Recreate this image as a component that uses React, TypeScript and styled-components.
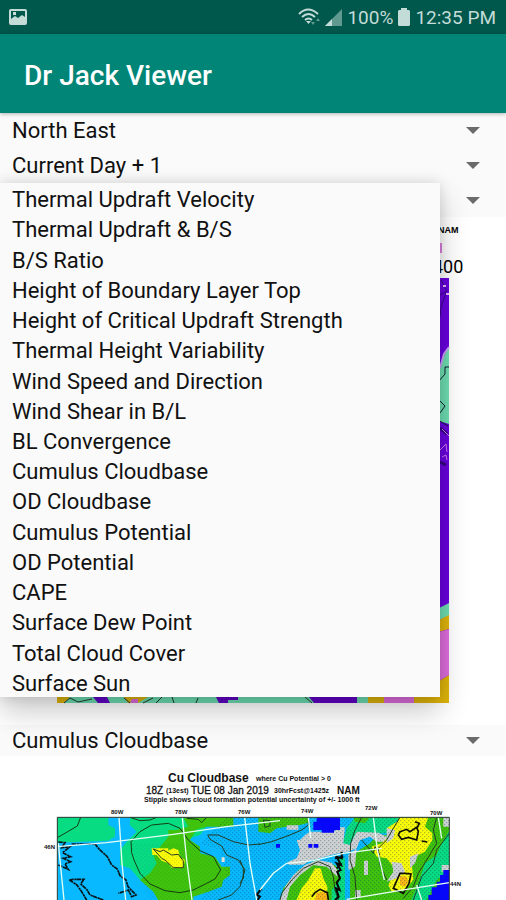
import React from "react";
import styled, { createGlobalStyle } from "styled-components";

const GlobalStyle = createGlobalStyle`
  * { box-sizing: border-box; }
  body {
    margin: 0;
    background: #fafafa;
    color: #111;
    font-family: Roboto, sans-serif;
    font-size: 22px;
  }
`;

const Screen = styled.div`
  display: flex;
  flex-direction: column;
  overflow: hidden;
`;

const StatusBar = styled.div`
  display: flex;
  align-items: center;
  justify-content: space-between;
  height: 34px;
  padding: 0 10px 0 8px;
  background: #00574b;
  color: #c3dcd8;
  font-size: 19px;
`;

const StatusGroup = styled.div`
  display: flex;
  align-items: center;
  gap: 5px;
`;

const AppBar = styled.header`
  display: flex;
  align-items: center;
  height: 79px;
  padding: 4px 24px 0;
  background: #008577;
  box-shadow: 0 1px 4px rgba(0, 0, 0, 0.3);
  z-index: 1;
`;

const Title = styled.h1`
  margin: 0;
  color: #fff;
  font-size: 28px;
  font-weight: 500;
`;

const Filters = styled.div`
  display: grid;
  gap: 1px;
`;

const Field = styled.div<{ $height: number }>`
  position: relative;
  display: grid;
  align-items: center;
  height: ${(p) => p.$height}px;
`;

const Select = styled.select`
  grid-area: 1 / 1;
  width: 100%;
  height: 100%;
  padding: 0 48px 0 12px;
  border: 0;
  appearance: none;
  background: transparent;
  color: inherit;
  font: inherit;
`;

const Arrow = styled.svg`
  grid-area: 1 / 1;
  justify-self: end;
  width: 14px;
  height: 7px;
  margin-right: 26px;
  pointer-events: none;
`;

const Menu = styled.ul`
  position: absolute;
  z-index: 2;
  top: 0;
  left: 0;
  display: grid;
  grid-auto-rows: 1fr;
  width: 87%;
  height: 514px;
  margin: 0;
  padding: 0;
  list-style: none;
  background: #fafafa;
  box-shadow: 0 14px 28px rgba(0, 0, 0, 0.22), 0 0 12px rgba(0, 0, 0, 0.12);
`;

const MenuItem = styled.button`
  display: block;
  width: 100%;
  height: 100%;
  padding: 4px 12px 0;
  border: 0;
  background: transparent;
  color: inherit;
  font: inherit;
  line-height: 26px;
  text-align: left;
  white-space: nowrap;
`;

const Chart = styled.svg`
  display: block;
  width: 100%;
  height: auto;
  background: #fff;
  font-family: "Liberation Sans", sans-serif;
`;

const parameters = [
  "Thermal Updraft Velocity",
  "Thermal Updraft & B/S",
  "B/S Ratio",
  "Height of Boundary Layer Top",
  "Height of Critical Updraft Strength",
  "Thermal Height Variability",
  "Wind Speed and Direction",
  "Wind Shear in B/L",
  "BL Convergence",
  "Cumulus Cloudbase",
  "OD Cloudbase",
  "Cumulus Potential",
  "OD Potential",
  "CAPE",
  "Surface Dew Point",
  "Total Cloud Cover",
  "Surface Sun",
];

type SpinnerProps = {
  label: string;
  options: string[];
  height?: number;
  children?: React.ReactNode;
};

function Spinner({ label, options, height = 34, children }: SpinnerProps) {
  return (
    <Field $height={height}>
      <Select aria-label={label}>
        {options.map((o) => (
          <option key={o}>{o}</option>
        ))}
      </Select>
      <Arrow viewBox="0 0 14 7" aria-hidden="true">
        <path d="M0 0H14L7 7Z" fill="#6b6b6b" />
      </Arrow>
      {children}
    </Field>
  );
}

function PictureIcon() {
  return (
    <svg width="20" height="18" viewBox="0 0 20 18" aria-hidden="true">
      <path
        fill="#c3dcd8"
        fillRule="evenodd"
        d="M3 1H17Q19 1 19 3V15Q19 17 17 17H3Q1 17 1 15V3Q1 1 3 1ZM3 3V11L7 8L10 10L14 7L17 9V3ZM5 4H8V7H5Z"
      />
    </svg>
  );
}

function WifiIcon() {
  return (
    <svg width="22" height="18" viewBox="0 0 22 18" aria-hidden="true">
      <g fill="none" stroke="#c3dcd8" strokeWidth="2">
        <path d="M1 6Q10 -3 20 6" />
        <path d="M4 9Q10.500 3 17 9" />
        <path d="M7 12Q10.500 9 14 12" />
      </g>
      <path d="M8 13H13L10.500 16Z" fill="#c3dcd8" />
      <path d="M13 14H17L15 17ZM18 13L20 10L22 13Z" fill="#5f9990" />
    </svg>
  );
}

function SignalIcon() {
  return (
    <svg width="17" height="18" viewBox="0 0 17 18" aria-hidden="true">
      <path d="M0 18L17 1V18Z" fill="#5f9990" />
      <path d="M0 18L7 11V18Z" fill="#c3dcd8" />
    </svg>
  );
}

function BatteryIcon() {
  return (
    <svg width="12" height="18" viewBox="0 0 12 18" aria-hidden="true">
      <path d="M3 0H9V2H11L12 3V17L11 18H1L0 17V3L1 2H3Z" fill="#c3dcd8" />
    </svg>
  );
}

function UpdraftChart() {
  return (
    <Chart viewBox="0 217 506 508" role="img" aria-label="Thermal updraft map">
      <text x="438" y="233" fontSize="9" fontWeight="700">NAM</text>
      <path d="M438 243H442V253H438Z" fill="#dc7ddf" />
      <text x="433" y="273" fontSize="18" fontFamily="Roboto, sans-serif">400</text>
      <path d="M57 278H449V703H57Z" fill="#6a00e0" />
      <path d="M441 280L447 291L440 295M446 293L441 307L440 317" fill="none" stroke="#3a008b" />
      <path d="M443 286H446M446 294H449" stroke="#e3b5ff" strokeWidth="2" />
      <path d="M449 347L444 356L439 370V421L449 424Z" fill="#6fe0b4" />
      <path d="M449 347L444 354L440 368" fill="none" stroke="#c9a4f4" strokeWidth="2" />
      <path d="M449 367H445V374L438 382M439 400L445 406L440 413M438 420L448 426" fill="none" stroke="#123" strokeWidth="1" />
      <path d="M440 428L447 434M440 462L446 465" stroke="#340080" strokeWidth="3" />
      <path d="M442 429L449 436M440 450L446 444L447 452M442 457L446 455L447 460" fill="none" stroke="#d17dfa" />
      <path d="M439 608L449 603V616L439 620Z" fill="#6fe0b4" />
      <path d="M439 620L449 615V629L439 632Z" fill="#e1b60b" />
      <path d="M439 632L449 629V675L439 681Z" fill="#e06edf" />
      <path d="M439 681L449 675V703H414V697H439Z" fill="#e1b60b" />
      <path d="M57 696H357V703H57Z" fill="#6fe0b4" />
      <path d="M57 697H70L64 703H57ZM124 697H148L138 703H128ZM368 697H385V703H368Z" fill="#e1b60b" />
      <path d="M93 697H107L110 703H98ZM216 697H238V700H228V703H219ZM309 697H357V703H314Z" fill="#6200c9" />
      <path d="M357 697H368V703H357Z" fill="#6fe0b4" />
      <path d="M384 697H414V703H384ZM132 699H138V703H130Z" fill="#e06edf" />
      <path d="M64 703L70 698L78 702L92 699M124 698L130 703M143 703L153 698M156 703L162 697M172 697L174 703M196 703L198 698M305 697L312 703" fill="none" stroke="#243b32" strokeWidth="1" />
    </Chart>
  );
}

function CloudbaseChart() {
  return (
    <Chart viewBox="0 756 506 144" role="img" aria-label="Cumulus cloudbase map">
      <defs>
        <pattern id="stipple" width="12" height="12" patternUnits="userSpaceOnUse">
          <path d="M0 0H4V4H0ZM6 6H10V10H6Z" fill="#003c50" opacity="0.3" />
        </pattern>
        <clipPath id="frame">
          <path d="M52 52H1228V310H52Z" />
        </clipPath>
      </defs>
      <g fontWeight="700" fill="#111">
        <text x="168" y="782" fontSize="12">Cu Cloudbase</text>
        <text x="256" y="781" fontSize="7">where Cu Potential &gt; 0</text>
        <text x="146" y="794" fontSize="10" fontWeight="400" stroke="#111" strokeWidth="0.300">18Z</text>
        <text x="166" y="793" fontSize="7">(13est)</text>
        <text x="191" y="794" fontSize="10" fontWeight="400" stroke="#111" strokeWidth="0.300">TUE 08 Jan 2019</text>
        <text x="274" y="793" fontSize="7">30hrFcst@1425z</text>
        <text x="337" y="794" fontSize="10">NAM</text>
        <text x="144" y="802" fontSize="7">Stipple shows cloud formation potential uncertainty of +/- 1000 ft</text>
        <g fontSize="6">
          <text x="111" y="814">80W</text>
          <text x="175" y="814">78W</text>
          <text x="238" y="814">76W</text>
          <text x="301" y="813">74W</text>
          <text x="365" y="810">72W</text>
          <text x="430" y="815">70W</text>
          <text x="44" y="849">46N</text>
          <text x="450" y="886">44N</text>
        </g>
      </g>
      <g transform="translate(40 800) scale(0.33333)">
        <g clipPath="url(#frame)">
          <path d="M52 52H1228V310H52Z" fill="#08b9ff" />
          <path d="M52 52H205V75L225 85V110L205 122L52 128Z" fill="#08dc83" />
          <path d="M270 52H435L460 75L500 80L480 105L450 115V150L400 200L330 230L300 240L270 205L240 195V150L265 120L290 95L270 75Z" fill="#08dc83" />
          <path d="M430 52H580V80H500L470 88L450 120L480 140V160L525 170L545 200H570V225L550 240L545 260L505 275L460 290V310H360L340 275L300 240L330 220L350 190L340 165L385 110V90H410L445 80Z" fill="#40c30c" />
          <path d="M335 145H385V152L400 145L415 150L420 172L435 180L430 203H395L385 190L365 182L350 165H337Z" fill="#fcfc08" />
          <g transform="translate(600 0)">
            <path d="M55 52H205V68L180 75L140 80L110 85L90 100L55 95Z" fill="#40c30c" />
            <path d="M345 52H480L440 100H350L320 145L310 125L320 85Z" fill="#08dc83" />
            <path d="M340 52H390L375 70L345 65ZM410 105H440V130L465 100L480 52H628V180L570 310H330V205L350 155L390 130Z" fill="#40c30c" />
            <path d="M120 310L130 265L175 210L230 180L285 195L310 230L305 310Z" fill="#40c30c" />
            <path d="M140 76H175V89H140ZM170 120H180L195 105L210 95H280L300 82H315L310 130L330 135L350 95L415 98L440 110V125H410L390 110L360 120L350 145L325 155L285 162L240 175L210 182L190 194H145V185L170 175L180 150Z" fill="#cfd1d2" />
            <path d="M120 300L135 260L160 225L195 195L235 180L275 188L292 210L292 230L260 200L220 195L180 225L150 260L140 300ZM325 165L350 145L345 200L325 210Z" fill="#cfd1d2" />
            <path d="M372 182H384V225H372ZM345 270H362V292H345Z" fill="#cfd1d2" />
            <path d="M292 175H315V310H275V270L300 240Z" fill="#08dc83" />
            <path d="M165 310L185 265L205 240L225 205H242L250 235L262 260V310Z" fill="#fcfc08" />
            <path d="M440 85L475 62V52H565L555 80L577 100V120L555 155L535 165L515 185L520 240L495 270L455 275L445 255L460 225V200L440 175L410 170L395 140L425 130L445 110L465 105Z" fill="#fcfc08" />
            <path d="M440 85L465 90L460 115L440 130ZM455 185L485 190L495 215L470 235L440 245L460 215ZM510 170L535 160L525 190L510 205Z" fill="#cfd1d2" />
            <path d="M628 92V210L590 240L555 310H510L535 250L555 190L590 165L605 130Z" fill="#08dc83" />
            <path d="M610 52H628V80H610ZM605 195H628V215H605Z" fill="#cfd1d2" />
            <path d="M480 228L500 230L505 245L495 260L480 255ZM230 278L260 275L265 300H225Z" fill="#fdb714" />
          </g>
          <path d="M560 52H1228V310H470L500 270L560 230L540 150L480 130L510 100Z" fill="url(#stipple)" />
          <path d="M270 130H500L560 230L500 280L400 310H330Z" fill="url(#stipple)" opacity="0.4" />
          <g transform="translate(600 0)">
            <path d="M220 65H230V52H300V90H282V98H245V90H220ZM108 132H120V143H108ZM205 132H217V143H205ZM221 132H235V143H221Z" fill="#0606f8" />
            <path d="M628 210H610V225H600V245H590V262H575V285H565V310H628Z" fill="#0606f8" />
          </g>
          <path d="M52 113L78 98L112 78L122 52M270 52L300 62L330 60L350 52M440 55L475 58L485 68L500 52M275 158L273 125L300 95L335 75L385 70L420 85L445 120L480 152L520 170L542 210L525 237L500 250L460 270L420 278L375 272L330 252L300 220L282 180Z" fill="none" stroke="#163b13" strokeWidth="3" />
          <path d="M660 132L625 135L580 125L535 105L503 105L510 118L545 138L560 165L595 180L615 210L600 260L575 285L535 300M340 147L360 155L370 150L395 165L415 163L430 183L430 203L400 203L375 180L365 175Z" fill="none" stroke="#263c24" strokeWidth="3" />
          <path d="M55 126L75 128L65 143L90 140L68 158L92 170L70 175L92 185L75 192L85 208L55 195M95 132H165L178 148L202 170L215 195L232 207L240 227L258 240L264 260L288 285L275 290L265 270L235 280M88 240L100 238H132L122 252L140 268L150 285L190 300M88 240L110 254L125 275L140 300" fill="none" stroke="#07151a" strokeWidth="5" strokeDasharray="13 2 7 1" />
          <g transform="translate(600 0)">
            <path d="M55 134L95 125L150 105L185 90L205 75V52M70 60L90 62V78L75 82ZM0 180L10 205V235L0 250M120 300L125 280L155 240L190 205L235 185L270 200L280 230L285 270L295 300M365 52L345 90L332 130L330 180L345 230L350 300M480 52L460 85L440 120L415 145L420 195L440 240M590 52L580 90L590 130L560 180L535 220L520 260L490 295M628 100L590 150L580 190L545 230L520 300M365 120L400 160L405 140L420 165" fill="none" stroke="#223c20" strokeWidth="3" />
            <path d="M480 95L500 88L510 95L530 82L535 95L530 120L505 112L485 118L475 105ZM525 65L538 70L532 82M545 123L562 126M480 220H495L513 222L507 250L490 280L460 265ZM215 290L225 278L240 268L262 278L265 300" fill="none" stroke="#101000" strokeWidth="5" />
            <path d="M305 155V175L290 170L303 195L290 190L302 210L292 215L300 235L290 248L299 270L288 265L296 290L285 300M285 175L310 170M290 205L305 190M65 265L50 285L60 290L45 310" fill="none" stroke="#050505" strokeWidth="6" />
          </g>
          <path d="M55 130L72 300M237 52L246 190L257 300M427 52L440 180L456 300M614 52L630 190L650 300M52 140L200 128L400 103L560 80L720 62M805 52L812 115M1000 52L1012 150L1033 240M1195 52L1205 115M660 270L700 220L740 190L820 182L910 160L1025 145M920 298L1100 268L1228 248M1130 255L1145 300" fill="none" stroke="#e5fff6" strokeWidth="4" />
          <path d="M545 172H554V186H545Z" fill="#e7e2d4" />
        </g>
        <path d="M52 300V52H1228V300" fill="none" stroke="#29352e" strokeWidth="3" />
      </g>
    </Chart>
  );
}

export default function App() {
  return (
    <>
      <GlobalStyle />
      <Screen>
        <StatusBar>
          <PictureIcon />
          <StatusGroup>
            <WifiIcon />
            <SignalIcon />
            <span>100%</span>
            <BatteryIcon />
            <span>12:35 PM</span>
          </StatusGroup>
        </StatusBar>
        <AppBar>
          <Title>Dr Jack Viewer</Title>
        </AppBar>
        <main>
          <Filters>
            <Spinner label="Region" options={["North East"]} />
            <Spinner label="Forecast day" options={["Current Day + 1"]} />
            <Spinner label="First parameter" options={parameters}>
              <Menu aria-label="Parameters">
                {parameters.map((name) => (
                  <li key={name}>
                    <MenuItem type="button">{name}</MenuItem>
                  </li>
                ))}
              </Menu>
            </Spinner>
          </Filters>
          <UpdraftChart />
          <Spinner label="Second parameter" options={["Cumulus Cloudbase"]} height={31} />
          <CloudbaseChart />
        </main>
      </Screen>
    </>
  );
}
